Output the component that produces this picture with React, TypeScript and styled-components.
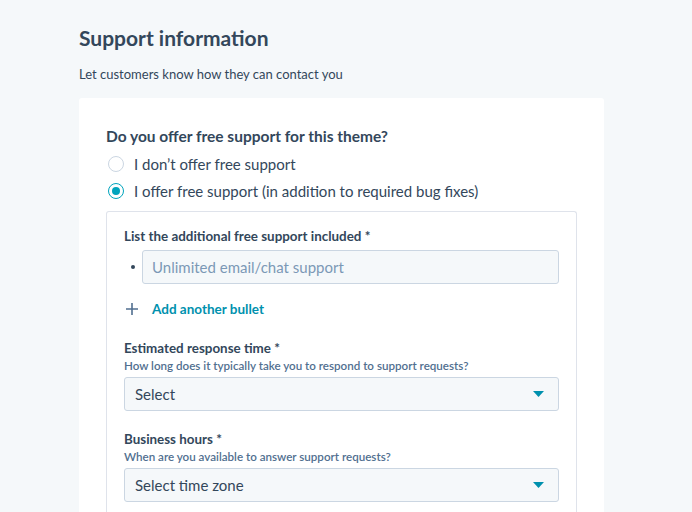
import React, { useState } from 'react';
import styled, { createGlobalStyle } from 'styled-components';

const GlobalStyle = createGlobalStyle`
  html, body {
    margin: 0;
    padding: 0;
    background: #f5f8fa;
  }
  body {
    font-family: Lato, "Noto Sans", sans-serif;
    color: #33475b;
  }
`;

const Page = styled.div`
  width: 525px;
  padding: 24px 0 0 79px;
`;

const Title = styled.h2`
  margin: 0;
  font-size: 21px;
  line-height: 28px;
  font-weight: 700;
  color: #33475b;
`;

const Subtitle = styled.p`
  margin: 12px 0 0;
  font-size: 13px;
  line-height: 20px;
`;

const Card = styled.div`
  margin-top: 14px;
  background: #fff;
  border-radius: 3px;
  padding: 28px 27px 0 27px;
  min-height: 500px;
`;

const Question = styled.div`
  font-size: 15.5px;
  font-weight: 700;
  line-height: 20px;
`;

const RadioList = styled.div`
  display: flex;
  flex-direction: column;
  padding-top: 4px;
`;

const RadioRow = styled.label`
  display: flex;
  align-items: center;
  gap: 10px;
  height: 27px;
  padding-left: 2px;
  font-size: 15px;
  cursor: pointer;
`;

const RadioCircle = styled.span<{ $checked: boolean }>`
  box-sizing: border-box;
  width: 16px;
  height: 16px;
  border-radius: 50%;
  border: 1.5px solid ${p => (p.$checked ? '#00a4bd' : '#cbd6e2')};
  display: flex;
  align-items: center;
  justify-content: center;
  &::after {
    content: '';
    width: 8px;
    height: 8px;
    border-radius: 50%;
    background: ${p => (p.$checked ? '#00a4bd' : 'transparent')};
  }
`;

const Panel = styled.div`
  margin-top: 7px;
  border: 1px solid #dfe3eb;
  border-bottom: none;
  border-radius: 3px 3px 0 0;
  padding: 14px 17px 40px 17px;
`;

const Label = styled.div`
  font-size: 13.4px;
  font-weight: 700;
  line-height: 20px;
`;

const Helper = styled.div`
  font-size: 11.6px;
  font-weight: 600;
  line-height: 16px;
  color: #516f90;
`;

const BulletRow = styled.div`
  display: flex;
  align-items: center;
  margin-top: 4px;
`;

const Bullet = styled.span`
  width: 18px;
  display: flex;
  justify-content: center;
  &::before {
    content: '';
    width: 4px;
    height: 4px;
    border-radius: 50%;
    background: #33475b;
  }
`;

const TextInput = styled.input`
  box-sizing: border-box;
  flex: 1;
  height: 34px;
  margin-left: 0;
  padding: 0 9px;
  border: 1px solid #cbd6e2;
  border-radius: 3px;
  background: #f5f8fa;
  font: inherit;
  font-size: 15px;
  color: #33475b;
  outline: none;
  &::placeholder {
    color: #7c98b6;
  }
`;

const AddButton = styled.button`
  display: flex;
  align-items: center;
  gap: 14px;
  margin: 13px 0 0 2px;
  padding: 0;
  border: none;
  background: none;
  font: inherit;
  font-size: 13.5px;
  font-weight: 700;
  line-height: 24px;
  color: #0091ae;
  cursor: pointer;
`;

const Field = styled.div<{ $gap: number }>`
  margin-top: ${p => p.$gap}px;
`;

const SelectBox = styled.div`
  box-sizing: border-box;
  display: flex;
  align-items: center;
  justify-content: space-between;
  height: 34px;
  margin-top: 3px;
  padding: 0 14px 0 10px;
  border: 1px solid #cbd6e2;
  border-radius: 3px;
  background: #f5f8fa;
  font-size: 15px;
  cursor: pointer;
`;

function PlusIcon() {
  return (
    <svg width="12" height="12" viewBox="0 0 12 12">
      <path d="M6 0v12M0 6h12" stroke="#516f90" strokeWidth="1.6" />
    </svg>
  );
}

function Caret() {
  return (
    <svg width="11" height="6" viewBox="0 0 11 6">
      <path d="M0 0h11L5.5 6z" fill="#0091ae" />
    </svg>
  );
}

const options = [
  { id: 'none', label: 'I don\u2019t offer free support' },
  { id: 'free', label: 'I offer free support (in addition to required bug fixes)' },
];

export default function App() {
  const [choice, setChoice] = useState('free');

  return (
    <>
      <GlobalStyle />
      <Page>
        <Title>Support information</Title>
        <Subtitle>Let customers know how they can contact you</Subtitle>
        <Card>
          <Question>Do you offer free support for this theme?</Question>
          <RadioList>
            {options.map(opt => (
              <RadioRow key={opt.id} onClick={() => setChoice(opt.id)}>
                <RadioCircle $checked={choice === opt.id} />
                {opt.label}
              </RadioRow>
            ))}
          </RadioList>
          {choice === 'free' ? (
            <Panel>
              <Label>List the additional free support included *</Label>
              <BulletRow>
                <Bullet />
                <TextInput placeholder="Unlimited email/chat support" />
              </BulletRow>
              <AddButton type="button">
                <PlusIcon />
                Add another bullet
              </AddButton>
              <Field $gap={17}>
                <Label>Estimated response time *</Label>
                <Helper>How long does it typically take you to respond to support requests?</Helper>
                <SelectBox>
                  Select
                  <Caret />
                </SelectBox>
              </Field>
              <Field $gap={18}>
                <Label>Business hours *</Label>
                <Helper>When are you available to answer support requests?</Helper>
                <SelectBox>
                  Select time zone
                  <Caret />
                </SelectBox>
              </Field>
            </Panel>
          ) : null}
        </Card>
      </Page>
    </>
  );
}
